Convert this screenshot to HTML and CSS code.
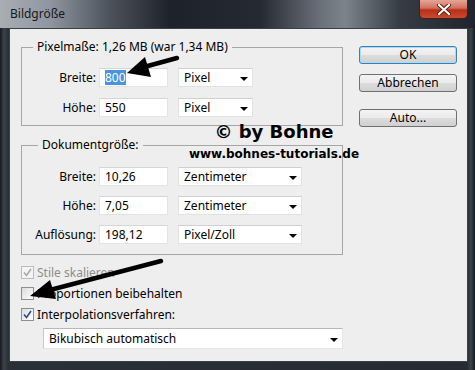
FILE: index.html
```html
<!DOCTYPE html>
<html lang="de">
<head>
    <meta charset="UTF-8">
    <title>Bildgröße</title>
    <link rel="stylesheet" href="styles.css">
</head>
<body>
    <div class="window">
        <div class="titlebar">
            <span class="title">Bildgröße</span>
            <button class="close-btn">
                <svg width="14" height="11" viewBox="0 0 14 11">
                    <path d="M2 1 L12 10 M12 1 L2 10" stroke="#5a1a10" stroke-width="4" stroke-linecap="round"/>
                    <path d="M2 1 L12 10 M12 1 L2 10" stroke="#ffffff" stroke-width="2.2" stroke-linecap="round"/>
                </svg>
            </button>
        </div>

        <div class="client">
            <div class="left-col">
                <fieldset class="group">
                    <legend>Pixelmaße: 1,26 MB (war 1,34 MB)</legend>
                    <div class="rows rows-pixel">
                        <div class="field-row">
                            <label>Breite:</label>
                            <span class="input"><span class="selected">800</span></span>
                            <span class="select select-short">Pixel <i class="caret"></i></span>
                        </div>
                        <div class="field-row">
                            <label>Höhe:</label>
                            <span class="input">550</span>
                            <span class="select select-short">Pixel <i class="caret"></i></span>
                        </div>
                    </div>
                </fieldset>

                <fieldset class="group group-doc">
                    <legend>Dokumentgröße:</legend>
                    <div class="rows">
                        <div class="field-row">
                            <label>Breite:</label>
                            <span class="input">10,26</span>
                            <span class="select">Zentimeter <i class="caret"></i></span>
                        </div>
                        <div class="field-row">
                            <label>Höhe:</label>
                            <span class="input">7,05</span>
                            <span class="select">Zentimeter <i class="caret"></i></span>
                        </div>
                        <div class="field-row">
                            <label>Auflösung:</label>
                            <span class="input">198,12</span>
                            <span class="select">Pixel/Zoll <i class="caret"></i></span>
                        </div>
                    </div>
                </fieldset>

                <div class="checks">
                    <div class="check disabled">
                        <span class="box"><svg width="9" height="9" viewBox="0 0 9 9"><path d="M1 4.5 L3.5 7.5 L8 1" fill="none" stroke="#a9a9a9" stroke-width="1.6"/></svg></span>
                        Stile skalieren
                    </div>
                    <div class="check">
                        <span class="box"></span>
                        Proportionen beibehalten
                    </div>
                    <div class="check">
                        <span class="box"><svg width="9" height="9" viewBox="0 0 9 9"><path d="M1 4.5 L3.5 7.5 L8 1" fill="none" stroke="#2d4a8a" stroke-width="1.6"/></svg></span>
                        Interpolationsverfahren:
                    </div>
                </div>

                <span class="select select-wide">Bikubisch automatisch <i class="caret"></i></span>
            </div>

            <div class="buttons">
                <button class="btn btn-default">OK</button>
                <button class="btn">Abbrechen</button>
                <button class="btn btn-auto">Auto...</button>
            </div>
        </div>

        <div class="watermark">
            <span class="wm-big">© by Bohne</span>
            <span class="wm-small">www.bohnes-tutorials.de</span>
        </div>

        <svg class="arrows" width="475" height="370" viewBox="0 0 475 370">
            <line x1="177" y1="58" x2="144" y2="67" stroke="#000" stroke-width="4.5" stroke-linecap="round"/>
            <polygon points="127,73 145,57 151,77" fill="#000"/>
            <line x1="161" y1="261" x2="50" y2="290" stroke="#000" stroke-width="4.5" stroke-linecap="round"/>
            <polygon points="30,296 50,280 56,299" fill="#000"/>
        </svg>
    </div>
</body>
</html>
```

FILE: styles.css
```css
body {
    margin: 0;
    font-family: 'Noto Sans', 'DejaVu Sans', sans-serif;
    font-size: 12px;
    color: #000;
}

.window {
    position: relative;
    width: 475px;
    height: 370px;
    box-sizing: border-box;
    padding: 0 7px 8px 9px;
    display: flex;
    flex-direction: column;
    background: linear-gradient(to right, #15191f 0, #3d434b 4px, #2a3038 8px, #262b33 467px, #3d434b 471px, #15191f 475px);
}

.titlebar {
    height: 28px;
    margin: 0 -7px 0 -9px;
    padding: 0 7px 0 10px;
    display: flex;
    justify-content: space-between;
    align-items: flex-start;
    background: linear-gradient(to right, #a9aeb4 0, #9096a0 50px, #4c525b 110px, #1e232b 170px, #252a32 260px, #6a7079 320px, #7d838b 345px, #363c44 400px, #20252d 475px);
}

.title {
    line-height: 28px;
    color: #15181c;
}

.close-btn {
    width: 49px;
    height: 19px;
    padding: 0;
    border: 1px solid #4a1e18;
    border-top: none;
    border-radius: 0 0 5px 5px;
    background: linear-gradient(#e4a798 0, #d0705c 45%, #b8301a 55%, #c84a30 100%);
    display: flex;
    justify-content: center;
    align-items: center;
}

.client {
    flex: 1;
    display: flex;
    padding: 10px 10px 0 11px;
    background: #eeeeee;
    border: 1px solid #3a4049;
}

.left-col {
    width: 322px;
    display: flex;
    flex-direction: column;
}

.group {
    margin: 0;
    padding: 13px 0 8px 11px;
    border: 1px solid #a6a6a6;
    min-width: 0;
}

.group legend {
    padding: 0 4px;
    line-height: 16px;
}

.group-doc {
    margin-top: 11px;
    padding: 14px 0 10px 11px;
}

.group-doc legend {
    margin-left: 5px;
}

.rows {
    display: flex;
    flex-direction: column;
    gap: 10px;
}

.rows-pixel {
    gap: 11px;
}

.field-row {
    display: flex;
    align-items: center;
    height: 19px;
}

.field-row label {
    width: 63px;
    margin-right: 3px;
    text-align: right;
}

.input {
    width: 69px;
    height: 19px;
    box-sizing: border-box;
    padding-left: 5px;
    background: #fff;
    border: 1px solid #e4e4e4;
    border-top-color: #d6d6d6;
    display: flex;
    align-items: center;
}

.selected {
    background: #4a93e0;
    color: #fff;
    line-height: 15px;
}

.select {
    width: 124px;
    height: 19px;
    box-sizing: border-box;
    margin-left: 10px;
    padding: 0 4px 0 5px;
    background: #fff;
    border: 1px solid #e2e2e2;
    border-top-color: #d0d0d0;
    display: flex;
    justify-content: space-between;
    align-items: center;
}

.select-short {
    width: 75px;
}

.select-wide {
    width: 300px;
    height: 21px;
    margin: 4px 0 0 22px;
    border-color: #b8b8b8 #e6e6e6 #e6e6e6 #c8c8c8;
}

.caret {
    width: 0;
    height: 0;
    margin-top: 2px;
    border-left: 4px solid transparent;
    border-right: 4px solid transparent;
    border-top: 4px solid #000;
}

.checks {
    margin-top: 7px;
    display: flex;
    flex-direction: column;
    gap: 1px;
}

.check {
    height: 20px;
    display: flex;
    align-items: center;
    gap: 3px;
}

.check.disabled {
    color: #8d8d8d;
}

.box {
    width: 13px;
    height: 13px;
    box-sizing: border-box;
    border: 1px solid #8e8f8f;
    background: linear-gradient(135deg, #dcdcdc, #ffffff);
    display: flex;
    justify-content: center;
    align-items: center;
}

.disabled .box {
    border-color: #bcbcbc;
    background: #f4f4f4;
}

.buttons {
    width: 98px;
    margin-left: 16px;
    padding-top: 7px;
    display: flex;
    flex-direction: column;
}

.btn {
    height: 18px;
    margin-bottom: 10px;
    padding: 0;
    border: 1px solid #707070;
    border-radius: 3px;
    background: linear-gradient(#f3f3f3 0, #ebebeb 50%, #dddddd 51%, #d0d0d0 100%);
    font-family: inherit;
    font-size: 12px;
    color: #000;
    line-height: 16px;
}

.btn-default {
    border-color: #3c7fb1;
    box-shadow: inset 0 0 0 1px #a6dcf7;
}

.btn-auto {
    margin-top: 7px;
}

.watermark {
    position: absolute;
    left: 174px;
    top: 123px;
    width: 200px;
    display: flex;
    flex-direction: column;
    align-items: center;
    font-family: 'DejaVu Sans', sans-serif;
    font-weight: bold;
    color: #000;
}

.wm-big {
    font-size: 18px;
    line-height: 18px;
}

.wm-small {
    margin-top: 7px;
    font-size: 12px;
    line-height: 12px;
}

.arrows {
    position: absolute;
    left: 0;
    top: 0;
    pointer-events: none;
}
```
